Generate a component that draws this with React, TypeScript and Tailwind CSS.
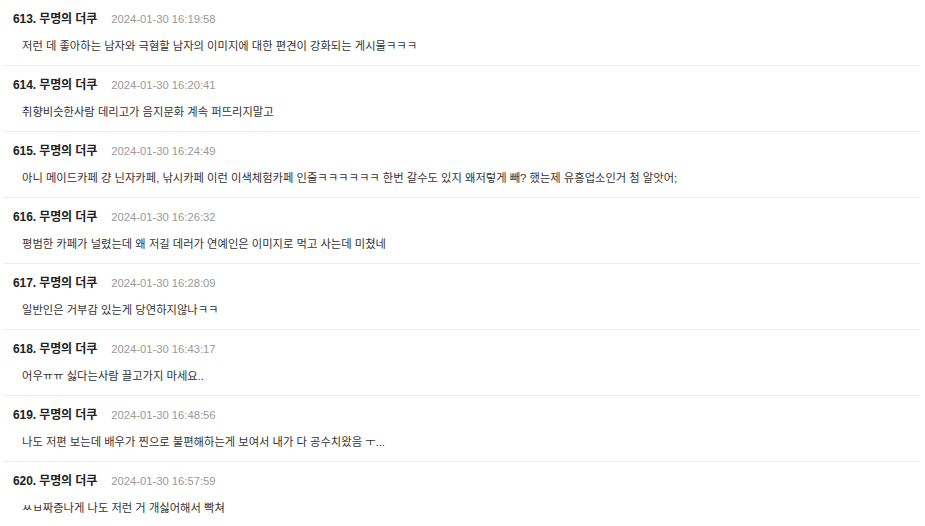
const comments = [
  { no: 613, date: "2024-01-30 16:19:58", text: "저런 데 좋아하는 남자와 극혐할 남자의 이미지에 대한 편견이 강화되는 게시물ㅋㅋㅋ" },
  { no: 614, date: "2024-01-30 16:20:41", text: "취향비슷한사람 데리고가 음지문화 계속 퍼뜨리지말고" },
  { no: 615, date: "2024-01-30 16:24:49", text: "아니 메이드카페 걍 닌자카페, 낚시카페 이런 이색체험카페 인줄ㅋㅋㅋㅋㅋㅋ 한번 갈수도 있지 왜저렇게 빼? 했는제 유흥업소인거 첨 알앗어;" },
  { no: 616, date: "2024-01-30 16:26:32", text: "평범한 카페가 널렸는데 왜 저길 데러가 연예인은 이미지로 먹고 사는데 미쳤네" },
  { no: 617, date: "2024-01-30 16:28:09", text: "일반인은 거부감 있는게 당연하지않나ㅋㅋ" },
  { no: 618, date: "2024-01-30 16:43:17", text: "어우ㅠㅠ 싫다는사람 끌고가지 마세요.." },
  { no: 619, date: "2024-01-30 16:48:56", text: "나도 저편 보는데 배우가 찐으로 불편해하는게 보여서 내가 다 공수치왔음 ㅜ..." },
  { no: 620, date: "2024-01-30 16:57:59", text: "ㅆㅂ짜증나게 나도 저런 거 개싫어해서 빡쳐" },
];

export default function App() {
  return (
    <div className="min-h-screen bg-white font-['Liberation_Sans','Noto_Sans_CJK_KR',sans-serif]">
      <div className="pl-1 pr-[5px]">
        {comments.map((c) => (
          <div key={c.no} className="h-[66px] border-b border-[#ececec] last:border-b-0">
            <div className="flex items-baseline pl-[9px] pt-[10px]">
              <span className="text-[12px] font-bold text-[#222] tracking-[-0.1px]">
                {c.no}. 무명의 더쿠
              </span>
              <span className="ml-[14px] text-[11.25px] text-[#999]">{c.date}</span>
            </div>
            <p className="pl-[18px] pt-[10px] text-[11.3px] text-[#333] leading-[16px]">
              {c.text}
            </p>
          </div>
        ))}
      </div>
    </div>
  );
}
